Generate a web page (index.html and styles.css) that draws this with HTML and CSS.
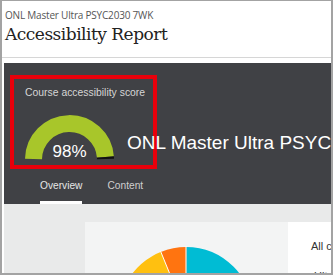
FILE: index.html
```html
<!DOCTYPE html>
<html>
<head>
<meta charset="utf-8">
<link rel="stylesheet" href="styles.css">
</head>
<body>
<div class="frame">
  <header class="page-head">
    <div class="course">ONL Master Ultra PSYC2030 7WK</div>
    <h1 class="title">Accessibility Report</h1>
  </header>
  <section class="hero">
    <div class="hero-top">
      <div class="score">
        <div class="score-label">Course accessibility score</div>
        <div class="gauge">
          <svg width="90" height="46" viewBox="0 0 90 46">
            <path d="M8.5 45 A36 36 0 0 1 80.4 43" fill="none" stroke="#a8c62a" stroke-width="17"/>
            <path d="M80.4 43 A36 36 0 0 1 80.5 45" fill="none" stroke="#111" stroke-width="17"/>
          </svg>
          <span class="gauge-value">98%</span>
        </div>
      </div>
      <div class="hero-title">ONL Master Ultra PSYC2030 7WK</div>
    </div>
    <nav class="tabs">
      <span class="tab active">Overview</span>
      <span class="tab">Content</span>
    </nav>
  </section>
  <section class="body">
    <div class="chart-card">
      <svg class="donut" width="203" height="52" viewBox="0 0 203 52">
        <g transform="translate(101 92)">
          <circle r="54" fill="none" stroke="#00bcd4" stroke-width="26" stroke-dasharray="200 400" transform="rotate(-90)"/>
          <circle r="54" fill="none" stroke="#ffc010" stroke-width="26" stroke-dasharray="93 400" transform="rotate(150)"/>
          <circle r="54" fill="none" stroke="#ff7410" stroke-width="26" stroke-dasharray="21 400" transform="rotate(-112)"/>
          <line x1="0" y1="-40" x2="0" y2="-68" stroke="#fff" stroke-width="1"/>
          <line x1="-15" y1="-37.2" x2="-25.5" y2="-63" stroke="#fff" stroke-width="1"/>
        </g>
      </svg>
    </div>
    <div class="legend">
      <div class="legend-title">All content</div>
      <div class="legend-item"><span class="swatch"></span>Ultra</div>
    </div>
  </section>
</div>
</body>
</html>
```
FILE: styles.css
```css
* { box-sizing: border-box; }
html, body { margin: 0; padding: 0; background: #fff; }
.frame {
  width: 333px;
  height: 275px;
  border: 2px solid #a3a3a3;
  border-top-width: 1px;
  overflow: hidden;
  display: flex;
  flex-direction: column;
  background: #fff;
}
.page-head {
  height: 57px;
  padding: 7px 0 0 3px;
  border-bottom: 1px solid #d6d6d6;
  flex: none;
}
.course {
  font-family: "Open Sans", sans-serif;
  font-size: 10px;
  color: #555;
  letter-spacing: -0.2px;
  line-height: 14px;
}
.title {
  margin: 1px 0 0;
  font-family: "DejaVu Serif", serif;
  font-weight: normal;
  font-size: 17px;
  color: #222;
  line-height: 22px;
  letter-spacing: -0.5px;
}
.hero {
  margin: 5px 0 0 2px;
  background: #404145;
  height: 141px;
  flex: none;
  display: flex;
  flex-direction: column;
}
.hero-top {
  display: flex;
  align-items: center;
  padding: 12px 0 0 6px;
  height: 106px;
}
.score {
  width: 147px;
  height: 94px;
  border: 4px solid #e8000b;
  display: flex;
  flex-direction: column;
  align-items: center;
  flex: none;
}
.score-label {
  align-self: flex-start;
  margin: 7px 0 0 11px;
  font-family: "Liberation Sans", Arial, sans-serif;
  font-size: 10.4px;
  color: #d6d6d6;
  line-height: 13px;
  white-space: nowrap;
}
.gauge {
  position: relative;
  width: 90px;
  height: 46px;
  margin-top: 15px;
  margin-left: -28px;
}
.gauge svg { display: block; }
.gauge-value {
  position: absolute;
  left: 0;
  right: 0;
  bottom: -2px;
  text-align: center;
  font-family: "Liberation Sans", Arial, sans-serif;
  font-size: 17px;
  color: #fff;
}
.hero-title {
  margin: 42px 0 0 -30px;
  font-family: "Liberation Sans", Arial, sans-serif;
  font-size: 19px;
  color: #fff;
  white-space: nowrap;
}
.tabs {
  display: flex;
  gap: 25px;
  padding: 0 0 0 36px;
  margin-top: auto;
}
.tab {
  font-family: "Liberation Sans", Arial, sans-serif;
  font-size: 10.2px;
  color: #cfcfcf;
  padding: 8px 0 10px;
  border-bottom: 3px solid transparent;
}
.tab.active {
  color: #e6e6e6;
  border-bottom-color: #fff;
}
.body {
  flex: 1;
  background: #e9eaea;
  display: flex;
  padding: 18px 0 0 81px;
  margin-left: 2px;
}
.chart-card {
  width: 203px;
  background: #f3f4f4;
  flex: none;
  overflow: hidden;
}
.donut { display: block; }
.legend {
  flex: 1;
  background: #fff;
  padding: 18px 0 0 23px;
  font-family: "Liberation Sans", Arial, sans-serif;
  font-size: 11px;
  color: #333;
  white-space: nowrap;
  overflow: hidden;
}
.legend-title { line-height: 13px; }
.legend-item {
  margin-top: 17px;
  display: flex;
  align-items: center;
  gap: 3px;
}
.swatch {
  width: 8px;
  height: 8px;
  background: #00bcd4;
  display: inline-block;
}
```
